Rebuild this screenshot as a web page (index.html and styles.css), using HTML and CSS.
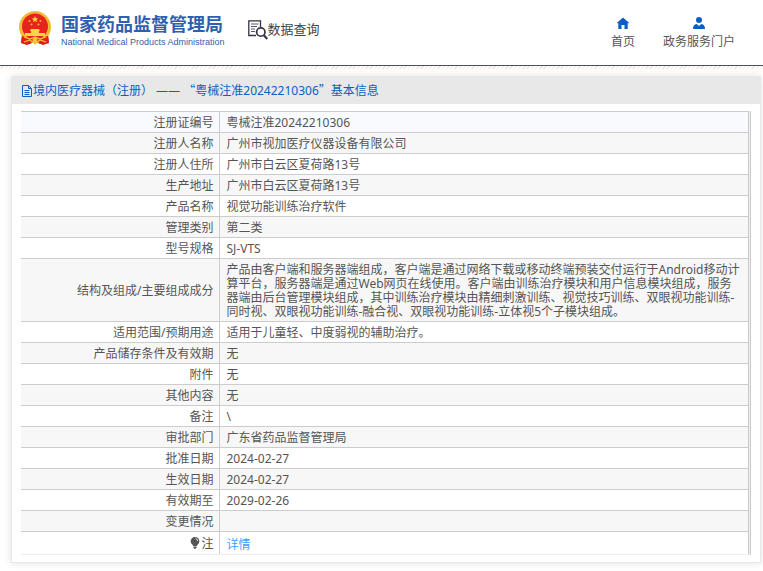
FILE: index.html
```html
<!DOCTYPE html>
<html lang="zh-CN">
<head>
<meta charset="utf-8">
<meta name="viewport" content="width=device-width, initial-scale=1">
<title>国家药品监督管理局 数据查询</title>
<link rel="stylesheet" href="styles.css">
</head>
<body>
<header class="site-header">
  <a class="brand" href="#">
    <svg class="emblem" viewBox="0 0 32 35" aria-hidden="true">
      <path d="M3 24 2 32l6 2 8-3 8 3 6-2-1-8z" fill="#d9201a"/>
      <circle cx="16" cy="16" r="16" fill="#f3c234"/>
      <circle cx="16" cy="16" r="14.6" fill="none" stroke="#e8ab28" stroke-width="1" stroke-dasharray="2 1"/>
      <circle cx="16" cy="15.500" r="13" fill="#e6231d"/>
      <path d="m16 5 .9 2.300 2.500.1-2 1.500.7 2.400-2.100-1.400-2.100 1.400.7-2.400-2-1.500 2.500-.1z" fill="#f9d33c"/>
      <g fill="#f5b335"><circle cx="10.500" cy="10" r="1"/><circle cx="21.500" cy="10" r="1"/><circle cx="12.500" cy="13.500" r="1"/><circle cx="19.500" cy="13.500" r="1"/></g>
      <path d="M12 18h8l1 2h-1v2h6v3H6v-3h6v-2h-1z" fill="#fad54a"/>
      <path d="M3 25q13 5 26 0l1 7-6 1-8-3-8 3-6-1z" fill="#dc211b"/>
      <path d="m5 26 6 2 5-2 5 2 6-2M5 31l6-2 5 4 5-4 6 2" fill="none" stroke="#f6c53a" stroke-width="1.200"/>
      <circle cx="16" cy="29" r="2.500" fill="#f6c53a"/>
    </svg>
    <span class="brand-text">
      <span class="brand-name">国家药品监督管理局</span>
      <span class="brand-sub" lang="en">National Medical Products Administration</span>
    </span>
  </a>
  <a class="query" href="#">
    <svg class="query-icon" viewBox="0 0 20 20" aria-hidden="true" fill="none" stroke="#33334a">
      <path d="M8 15.500H.8V.8H12.500V7" stroke-width="1.300"/>
      <path d="M3 4h7.500M3 6.500h6M3 9h4M3 11.500h4" stroke="#55566a"/>
      <circle cx="12.800" cy="12" r="4.200" stroke-width="1.700"/>
      <path d="m15.800 15.300 3.500 3.700" stroke-width="2.200"/>
    </svg>
    <span>数据查询</span>
  </a>
  <nav class="nav">
    <a class="nav-link" href="#">
      <svg class="nav-icon" viewBox="0 0 12 12" aria-hidden="true"><path d="M6 .5 0 5.800l.6.700.7-.4V12H4.500V8h3v4h3.200V6.100l.7.400.6-.7z" fill="#0a5fc4"/></svg>
      <span>首页</span>
    </a>
    <a class="nav-link" href="#">
      <svg class="nav-icon" viewBox="0 0 12 12" aria-hidden="true"><circle cx="6" cy="3" r="3" fill="#0a5fc4"/><path d="M0 12q0-4.500 3.600-5L6 9l2.400-2Q12 7.500 12 12z" fill="#0a5fc4"/></svg>
      <span>政务服务门户</span>
    </a>
  </nav>
</header>
<div class="hatch"></div>
<main class="card">
  <h1 class="card-title">
    <svg class="doc-icon" viewBox="0 0 12 12" aria-hidden="true" fill="none" stroke="#0a5fc4"><path d="M1.500.5h6l3 3v8h-9zM7.500.5v3h3M3.500 5.500h5M3.500 7.500h5M3.500 9.500h5"/></svg>
    <span>境内医疗器械（注册） —— <span class="quote">“</span>粤械注准20242210306<span class="quote">”</span>基本信息</span>
  </h1>
  <div class="table-wrap">
    <table class="info">
      <tbody>
        <tr><th scope="row">注册证编号</th><td>粤械注准20242210306</td></tr>
        <tr><th scope="row">注册人名称</th><td>广州市视加医疗仪器设备有限公司</td></tr>
        <tr><th scope="row">注册人住所</th><td>广州市白云区夏荷路13号</td></tr>
        <tr><th scope="row">生产地址</th><td>广州市白云区夏荷路13号</td></tr>
        <tr><th scope="row">产品名称</th><td>视觉功能训练治疗软件</td></tr>
        <tr><th scope="row">管理类别</th><td>第二类</td></tr>
        <tr><th scope="row">型号规格</th><td>SJ-VTS</td></tr>
        <tr><th scope="row">结构及组成/主要组成成分</th><td>产品由客户端和服务器端组成，客户端是通过网络下载或移动终端预装交付运行于Android移动计算平台，服务器端是通过Web网页在线使用。客户端由训练治疗模块和用户信息模块组成，服务器端由后台管理模块组成，其中训练治疗模块由精细刺激训练、视觉技巧训练、双眼视功能训练-同时视、双眼视功能训练-融合视、双眼视功能训练-立体视5个子模块组成。</td></tr>
        <tr><th scope="row">适用范围/预期用途</th><td>适用于儿童轻、中度弱视的辅助治疗。</td></tr>
        <tr><th scope="row">产品储存条件及有效期</th><td>无</td></tr>
        <tr><th scope="row">附件</th><td>无</td></tr>
        <tr><th scope="row">其他内容</th><td>无</td></tr>
        <tr><th scope="row">备注</th><td>\</td></tr>
        <tr><th scope="row">审批部门</th><td>广东省药品监督管理局</td></tr>
        <tr><th scope="row">批准日期</th><td>2024-02-27</td></tr>
        <tr><th scope="row">生效日期</th><td>2024-02-27</td></tr>
        <tr><th scope="row">有效期至</th><td>2029-02-26</td></tr>
        <tr><th scope="row">变更情况</th><td></td></tr>
        <tr class="note-row"><th scope="row"><svg class="bulb" viewBox="0 0 10 12" aria-hidden="true"><path d="M5 0a4.300 4.300 0 0 1 2.500 7.800L6.800 9H3.200l-.7-1.200A4.300 4.300 0 0 1 5 0zM3.500 9.500h3V11L5 12l-1.500-1z" fill="#555"/><path d="M5.500 1.500q2 .5 2.300 2.500" fill="none" stroke="#fff" stroke-width=".8"/></svg>注</th><td><a href="#">详情</a></td></tr>
      </tbody>
    </table>
  </div>
</main>
</body>
</html>
```
FILE: styles.css
```css
* {
  box-sizing: border-box;
}

body {
  margin: 0;
  background: #fff;
  color: #555;
  font: 12px/14px "Noto Sans", "Noto Sans CJK SC", sans-serif;
}

a {
  color: inherit;
  text-decoration: none;
}

svg {
  flex: none;
}

.site-header {
  display: flex;
  align-items: flex-start;
  height: 66px;
  padding: 11px 28px 0 19px;
  border-bottom: 1px solid #0a5fb4;
}

.hatch {
  height: 3px;
  background: repeating-linear-gradient(135deg, #fff 0 2px, #e8e8e8 2px 3px);
}

.brand {
  display: flex;
  gap: 10px;
  color: #2f5fae;
}

.emblem {
  width: 32px;
  height: 35px;
}

.brand-text {
  display: flex;
  flex-direction: column;
  padding-top: 2px;
}

.brand-name {
  font-size: 18px;
  line-height: 22px;
  font-weight: 700;
}

.brand-sub {
  font: 400 9px/14px "Liberation Sans", sans-serif;
}

.query {
  display: flex;
  margin: 9px 0 0 23px;
  color: #444;
  font-size: 13px;
  line-height: 18px;
}

.query-icon {
  width: 20px;
  height: 20px;
}

.nav {
  display: flex;
  gap: 28px;
  margin: 6px 0 0 auto;
}

.nav-link {
  display: flex;
  flex-direction: column;
  align-items: center;
  gap: 6px;
}

.nav-icon {
  width: 12px;
  height: 12px;
}

.card {
  margin: 7px 2px 8px 11px;
  border: 1px solid #e8e8e8;
  border-top: 0;
  background: #fff;
  box-shadow: 0 0 8px rgba(0, 0, 0, 0.12);
}

.card-title {
  display: flex;
  align-items: center;
  height: 28px;
  margin: 0;
  padding: 1px 9px 0;
  background: #e8e8e8;
  color: #0a5fc4;
  font-size: 12px;
  font-weight: 400;
}

.quote {
  font-family: "Noto Sans CJK SC", sans-serif;
}

.doc-icon {
  width: 12px;
  height: 12px;
}

.table-wrap {
  margin: 7px 9px;
  padding-right: 1px;
  border-right: 1px solid #ccc;
  background: #ebeef5;
}

.info {
  width: 100%;
  border-collapse: collapse;
  background: #fff;
}

.info th,
.info td {
  height: 21px;
  padding: 4px 5px 2px 7px;
  border: 1px solid #ccc;
  font-weight: 400;
  text-align: left;
}

.info th {
  width: 198px;
  border-left: 0;
  text-align: right;
}

.info tr:nth-child(even) {
  background: #f7f7f7;
}

.info tr:first-child {
  background: #f8fafd;
}

.info .note-row th,
.info .note-row td {
  height: 23px;
  border-bottom-color: #ebeef5;
}

.info .note-row td {
  padding-top: 6px;
}

.info a {
  color: #409eff;
}

.bulb {
  width: 10px;
  height: 12px;
  margin-right: 1px;
  vertical-align: -1px;
}
```
